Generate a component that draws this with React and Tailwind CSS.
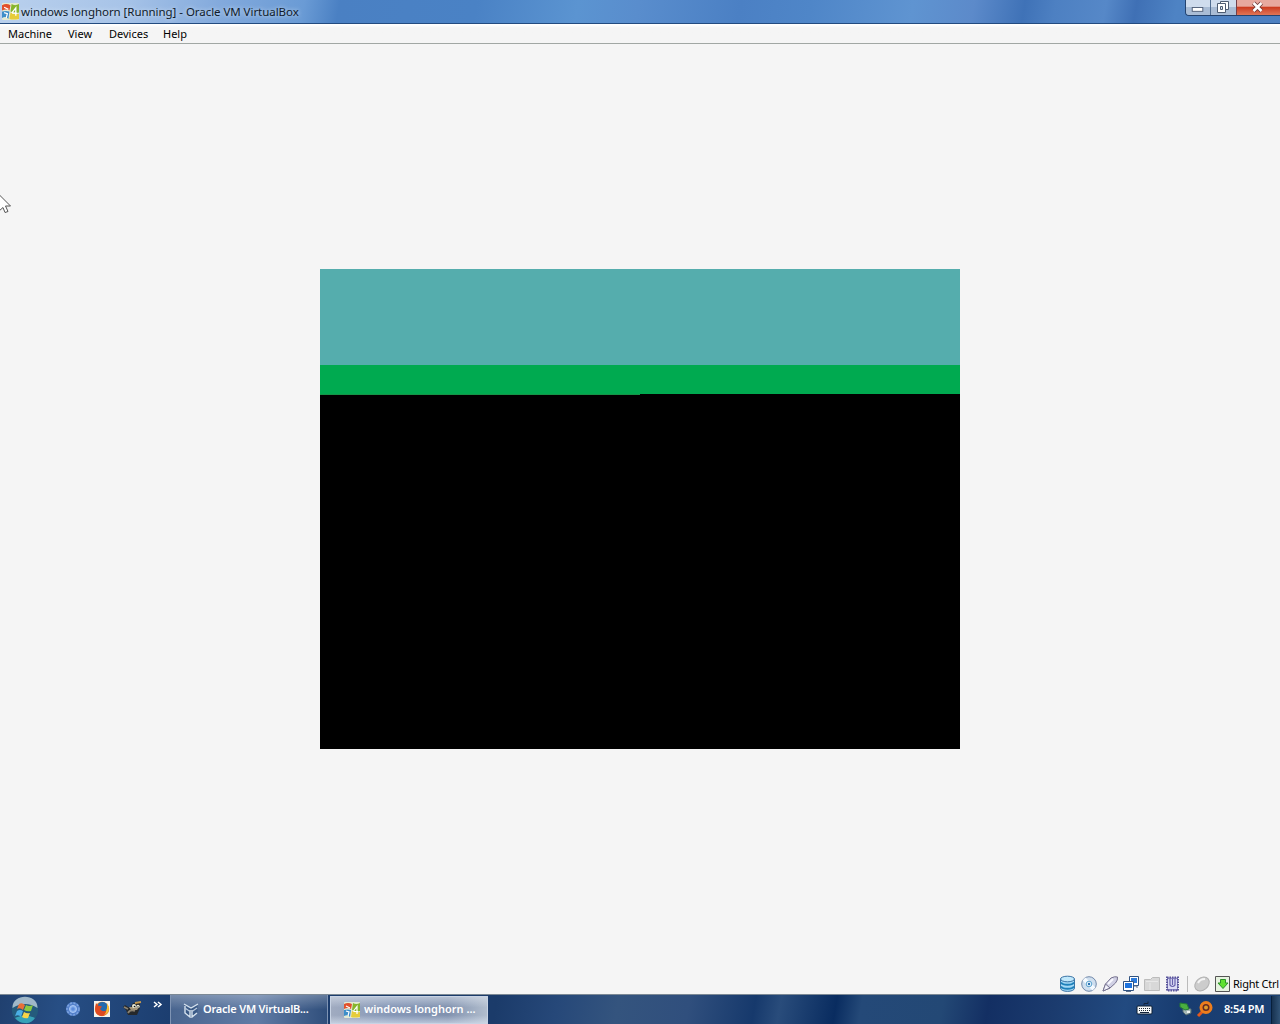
import React from "react";

const menuItems = [
  { label: "Machine", className: "w-[60px]" },
  { label: "View", className: "w-[41px]" },
  { label: "Devices", className: "w-[54px]" },
  { label: "Help", className: "w-[40px]" },
];

const WindowsLogo = ({ className }) => (
  <svg viewBox="0 0 16 16" className={className}>
    <rect width="16" height="16" rx="1" fill="#e3ead2" />
    <path d="M0 2 Q4 0 8 2 L7 7 Q4 5 0 7Z" fill="#e2502c" />
    <path d="M9 1 Q12 3 16 1 V9 Q12 10 8 8Z" fill="#86b52c" />
    <path d="M0 8 Q4 7 7 8 L6 15 Q4 12 0 14Z" fill="#3d8ec9" />
    <path d="M8 9 Q11 11 16 10 V15 Q10 16 7 15Z" fill="#e6cc3a" />
    <path d="M9.5 9 L13 4.5 V12 M9.5 9.5 H14 M2 4 L6 6 M2 9 L5 10 L4 14" fill="none" stroke="#fff" strokeWidth="1.2" />
  </svg>
);

const TitleBar = () => (
  <div className="flex h-6 items-start border-b border-[#234b7f] bg-[linear-gradient(100deg,#b9d0ed_0px,#a8c4e8_120px,#82a9dc_220px,#6a9bd5_300px,#4a80c3_335px,#4a82c5_470px,#5b94d1_570px,#598dcd_630px,#4b80c4_730px,#4f86c8_800px,#5f94d1_900px,#5c8aca_960px,#3f72b7_1010px,#4d80c2_1040px,#5688c8_1090px,#3f70b5_1120px,#4e83c4_1160px,#4d7fc0_1280px)]">
    <WindowsLogo className="mt-[3px] ml-[2px] h-[17px] w-[17px]" />
    <span className="mt-[4px] ml-[2px] font-['Noto_Sans',sans-serif] text-[11.5px] leading-4 tracking-[-0.05px] whitespace-nowrap text-[#101b2b] [text-shadow:0_0_4px_#dce9f8]">
      windows longhorn [Running] - Oracle VM VirtualBox
    </span>
    <div className="ml-auto flex h-4 w-[95px] overflow-hidden rounded-bl-[4px] border-b border-l border-[#24436f]">
      <button className="flex w-[25px] justify-center border-r border-[#506c90] bg-linear-to-b from-[#cfdced] from-45% to-[#a9bcd5] to-50%">
        <svg viewBox="0 0 25 15" className="h-[15px] w-[25px]">
          <rect x="6.5" y="7.5" width="11" height="4" fill="#fff" stroke="#53627b" />
        </svg>
      </button>
      <button className="flex w-[26px] justify-center border-r border-[#74404a] bg-linear-to-b from-[#cfdced] from-45% to-[#a9bcd5] to-50%">
        <svg viewBox="0 0 25 15" className="h-[15px] w-[25px]">
          <path d="M9.5 1.5 H17.5 V9.5 H9.5Z" fill="#fff" stroke="#4d5c72" />
          <path d="M6.5 3.5 H14.5 V12.5 H6.5Z" fill="#fff" stroke="#4d5c72" />
          <path d="M9.5 6.5 H11.5 V9.5 H9.5Z" fill="#dce4ef" stroke="#4d5c72" />
        </svg>
      </button>
      <button className="flex flex-1 justify-center bg-linear-to-b from-[#e7a99f] from-40% via-[#cc3d22] via-50% to-[#df7557]">
        <svg viewBox="0 0 42 15" className="h-[15px] w-[42px]">
          <path d="M15.5 3 L23.5 11 M23.5 3 L15.5 11" stroke="#6d3736" strokeWidth="4.2" />
          <path d="M15.5 3 L23.5 11 M23.5 3 L15.5 11" stroke="#fff" strokeWidth="2.6" />
        </svg>
      </button>
    </div>
  </div>
);

const MenuBar = () => (
  <div className="flex h-5 items-center border-b border-[#a1a7a4] bg-linear-to-b from-white from-5% to-[#f5f5f5] to-20% pt-0.5 pl-2 font-['Noto_Sans',sans-serif] text-[11px] text-black">
    {menuItems.map((item) => (
      <span key={item.label} className={item.className}>
        {item.label}
      </span>
    ))}
  </div>
);

// Guest display
const Screen = () => (
  <div className="h-[480px] w-[640px] bg-black">
    <div className="h-24 bg-[#55adad]" />
    <div className="h-[29px] bg-[#00aa50]" />
    <div className="h-px w-1/2 bg-[#159447]" />
  </div>
);

const StatusBar = () => (
  <div className="flex h-5 items-center justify-end font-['Noto_Sans',sans-serif] text-[11px] text-black">
    <svg viewBox="0 0 172 20" className="h-5 w-[172px]">
      {/* hard disk */}
      <g stroke="#3a73a5" fill="#a4d8f5">
        <path d="M2.5 5 V14 C2.5 18.5 16.5 18.5 16.5 14 V5" />
        <path d="M3 8.5 C5 11.5 14 11.5 16 8.5 M3 12.5 C5 15.5 14 15.5 16 12.5" fill="none" stroke="#1e80ba" strokeWidth="1.8" />
        <ellipse cx="9.5" cy="5" rx="7" ry="2.8" fill="#c0e8fb" />
      </g>
      {/* optical disc */}
      <circle cx="31" cy="10" r="7.3" fill="#cfdfef" stroke="#7289aa" />
      <path d="M31 10 L26 5 M31 10 L36 15" stroke="#f5faff" strokeWidth="4" />
      <circle cx="31" cy="10" r="2.8" fill="#eaf7ff" stroke="#5da3cf" />
      <circle cx="31" cy="10" r="1.2" fill="#2870b0" />
      {/* usb */}
      <path d="M45 17 L47.5 10 L53 4 Q57 2 59.5 3 Q60 6 57.5 9 L52 14Z" fill="#d0d0e4" stroke="#75718e" />
      <path d="M45 17 L47.5 10 L52 14Z" fill="#f1f1fa" stroke="#75718e" />
      <path d="M50 10 L55 5" stroke="#f8f8ff" strokeWidth="2" />
      {/* network */}
      <path d="M71.5 2.5 H80.5 V11.5 H71.5Z" fill="#fff" stroke="#315381" />
      <path d="M73 4 H79 V9 H73Z" fill="#2e7cdb" />
      <path d="M76 12 H79 V14" fill="none" stroke="#5a6f8c" />
      <path d="M65.5 7.5 H75.5 V16.5 H65.5Z" fill="#fff" stroke="#315381" />
      <path d="M67 9 H74 V14 H67Z" fill="#1d73de" />
      <path d="M68 17.5 H73" stroke="#5a6f8c" />
      {/* shared folders */}
      <path d="M86.5 16.5 V5.5 H92.5 L94.5 3.5 H101.5 V16.5Z" fill="#d8d8d8" stroke="#bcbcbc" />
      <path d="M88 7.5 H100 M92 9 V16" stroke="#e8e8e8" />
      {/* virtualization */}
      <path d="M109 3.5 H120 V16.5 H109Z" fill="#8c88c4" stroke="#5a569b" strokeDasharray="1.5 1" strokeWidth="2" />
      <path d="M110 5 H119 V15 H110Z" fill="#dcdcf4" />
      <path d="M112 5 V11 Q114.500 14 117 11 V5 M114.500 5 V11" fill="none" stroke="#6761ac" strokeWidth="1.2" />
      <path d="M129.5 2 V18" stroke="#bbb" />
      {/* mouse integration */}
      <ellipse cx="144" cy="10" rx="8" ry="6" transform="rotate(-40 144 10)" fill="#ccc" stroke="#b0b0b0" />
      <path d="M140 9 Q142 5 147 5" fill="none" stroke="#f4f4f4" strokeWidth="2" />
      {/* host key */}
      <path d="M157.500 2.500 H171.500 V17.500 H157.500Z" fill="#e6f2df" stroke="#555" />
      <path d="M162.5 5.5 H167.5 V9 H170 L165 14.500 L160 9 H162.5Z" fill="#5fe02f" stroke="#2a9128" />
    </svg>
    <span className="mr-px ml-[3px] w-[46px] tracking-[-0.25px] whitespace-nowrap">Right Ctrl</span>
  </div>
);

const StartButton = () => (
  <svg viewBox="0 0 28 28" className="mt-px ml-[11px] h-7 w-7 shrink-0">
    <circle cx="14" cy="14" r="13.2" fill="#245b7c" />
    <path d="M1.5 12 C1 -3 27 -3 26.5 12 Q14 4 1.5 12" fill="#9fb7c8" />
    <path d="M4 22 Q14 17 24 22 Q20 28 14 27 Q8 27 4 22" fill="#37a2b8" />
    <path d="M8 8 Q11 6 14 9 L12 14 Q9 11 6 13Z" fill="#e86f37" />
    <path d="M15 9 Q18 11 22 9 L20 15 Q16 16 13 14Z" fill="#8bc941" />
    <path d="M6 15 Q9 13 12 15 L10 21 Q8 18 4 20Z" fill="#4baee5" />
    <path d="M13 16 Q16 18 19 17 L17 22 Q14 23 11 21Z" fill="#f8d447" />
  </svg>
);

const QuickLaunch = () => (
  <svg viewBox="0 0 100 29" className="ml-[25px] h-[29px] w-[100px] shrink-0">
    <circle cx="9" cy="14" r="7" fill="#5380ca" />
    <circle cx="9" cy="14" r="6" fill="none" stroke="#7fa4df" strokeWidth="1.5" strokeDasharray="2 1.500" />
    <circle cx="9" cy="14" r="3.5" fill="#86aeea" stroke="#a9c7f6" />
    <circle cx="9" cy="14" r="1.8" fill="#5c8cdc" />
    {/* firefox */}
    <rect x="30" y="6" width="16" height="16" fill="#f7f4ed" />
    <circle cx="38" cy="14" r="7.2" fill="#ea7e20" />
    <circle cx="38.5" cy="11.8" r="4.9" fill="#246bae" />
    <path d="M32 8 L34 10.500 L38 11.500 L36 14 Q39 18 43.500 15 Q43 21 37 21 Q29 20 32 8" fill="#df4a22" />
    <path d="M43 8 Q48 16 40 20.500 Q44 15 43 8" fill="#f7c438" />
    {/* gimp */}
    <path d="M59 12 L61 10 L66 13 L69 8 L76 8 L76 13 L73 20 H64 L62 15Z" fill="#25282b" />
    <path d="M65 12 H75 L73 15 H67 Z" fill="#a49578" />
    <path d="M60 12 L64 14 M64 18 Q66 14 71 16" fill="none" stroke="#8b8271" strokeWidth="1.8" />
    <circle cx="70" cy="11" r="2" fill="#ececd9" />
    <circle cx="74" cy="11.5" r="1.7" fill="#ececd9" />
    <circle cx="70.5" cy="11.5" r=".8" fill="#111" />
    <circle cx="74" cy="12" r=".7" fill="#111" />
    <path d="M71 8 L77 7" stroke="#c1964d" strokeWidth="1.8" />
    <path d="M90 7 L93 9.5 L90 12 M94 7 L97 9.5 L94 12" fill="none" stroke="#fff" strokeWidth="1.5" />
  </svg>
);

const BoxIcon = () => (
  <svg viewBox="0 0 16 16" className="h-4 w-4 shrink-0">
    <path d="M1.5 3 L8 6.500 L14.5 3 V10 L8 15 L2 11Z" fill="#3b5a86" />
    <path d="M1 2 L8 6 L15 2 M2 4 V11 L7 15 V8 M9 8 V15 L14 11" fill="none" stroke="#d6e2ee" strokeWidth="1.4" />
    <path d="M2 6 L7 9.500 M9 9.500 L14 6" stroke="#b6c7dc" strokeWidth="1.3" />
  </svg>
);

const Tray = () => (
  <svg viewBox="0 0 82 29" className="h-[29px] w-[82px]">
    {/* keyboard */}
    <rect x="1" y="11" width="15" height="8" rx="1" fill="#f6f8f9" stroke="#0b1c30" />
    <path d="M3 13.5 H15 M3 15.5 H15" stroke="#202a35" strokeDasharray="1 1" />
    <path d="M4 17.5 H13 M8 10 V8.500 H12 V6.500" fill="none" stroke="#12233a" />
    {/* safely remove */}
    <path d="M47 13 L55 14 L55 18 L50 20 L47 17Z" fill="#a9b9b8" stroke="#566c72" />
    <path d="M44 8 L51 9 L53 14 L49 15 L44 12Z" fill="#4bae40" stroke="#237a36" />
    <path d="M51 17 H54" stroke="#eef3ee" strokeWidth="2" />
    {/* search */}
    <path d="M62 21 L67 16" stroke="#e5591c" strokeWidth="3" />
    <circle cx="70" cy="12.500" r="5" fill="#632b24" stroke="#ed7d1c" strokeWidth="3" />
    <circle cx="70" cy="12.500" r="2" fill="#e09a2b" />
  </svg>
);

const Taskbar = () => (
  <div className="flex h-[30px] items-center border-t border-[#7c8995] bg-[linear-gradient(100deg,#20406f_0px,#274e84_60px,#1c3e70_170px,#1b3b6a_490px,#264879_550px,#34547e_610px,#304f7d_680px,#16396c_745px,#294c7b_770px,#092c60_825px,#244978_850px,#234875_930px,#132f63_975px,#1b3b6e_1040px,#224a80_1110px,#183c70_1165px,#1c4275_1280px)] font-['Noto_Sans',sans-serif] text-[11px] font-semibold text-white">
    <StartButton />
    <QuickLaunch />
    <div className="ml-[6px] flex h-[29px] w-[158px] items-center border-r border-l border-[#7f94b4] bg-[linear-gradient(180deg,#ffffff40,transparent_50%),linear-gradient(90deg,#49658f,#607ba5_55%,#304f7c)] pl-3">
      <BoxIcon />
      <span className="ml-1 tracking-[-0.2px] whitespace-nowrap">Oracle VM VirtualB...</span>
    </div>
    <div className="ml-[2px] flex h-[28px] w-[158px] items-center border border-[#c8d3e4] bg-[linear-gradient(180deg,#dce3ed90,transparent_40%,transparent_70%,#dfe8f490),linear-gradient(90deg,#a0abc0,#8597b7_40%,#8192af_75%,#b1bdcd)] pl-[13px]">
      <WindowsLogo className="h-4 w-4 shrink-0" />
      <span className="ml-[4px] whitespace-nowrap">windows longhorn ...</span>
    </div>
    <div className="ml-auto flex items-center">
      <Tray />
      <span className="ml-[6px] w-[42px] tracking-[-0.2px] whitespace-nowrap">8:54 PM</span>
      <div className="ml-[5px] h-[28px] w-[9px] border-l border-[#071f3b] bg-linear-to-r from-[#173250] to-[#315376]" />
    </div>
  </div>
);

const Cursor = () => (
  <svg viewBox="0 0 12 20" className="absolute top-[195px] left-0 h-5 w-3">
    <path d="M-1.5 -1 L10.5 11 H5.5 L8 16.5 L5 17.5 L3 12.5 L-1.5 16.5Z" fill="#fff" stroke="#555" />
  </svg>
);

const App = () => {
  return (
    <div className="relative flex h-screen w-full flex-col overflow-hidden bg-[#f5f5f5]">
      <TitleBar />
      <MenuBar />
      <main className="flex flex-1 items-center justify-center">
        <Screen />
      </main>
      <StatusBar />
      <Taskbar />
      <Cursor />
    </div>
  );
};

export default App;
